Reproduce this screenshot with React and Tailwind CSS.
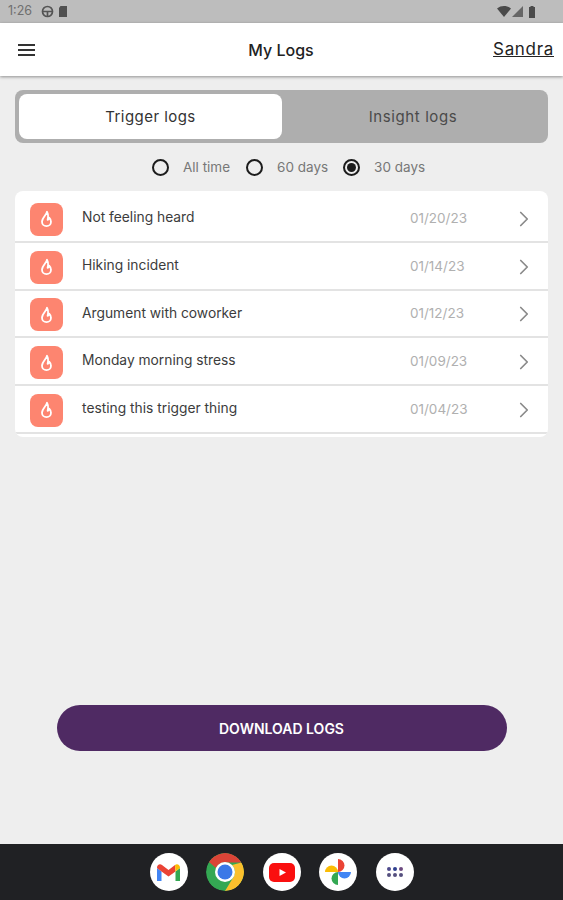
import React from 'react';
import { ChevronRight } from 'lucide-react';

const logs = [
  { title: 'Not feeling heard', date: '01/20/23' },
  { title: 'Hiking incident', date: '01/14/23' },
  { title: 'Argument with coworker', date: '01/12/23' },
  { title: 'Monday morning stress', date: '01/09/23' },
  { title: 'testing this trigger thing', date: '01/04/23' },
];

const Radio = ({ label, checked, labelClass }) => (
  <div className="flex items-center">
    <div className="w-[17px] h-[17px] rounded-full border-2 border-[#1c1c1c] flex items-center justify-center">
      {checked && <div className="w-[9px] h-[9px] rounded-full bg-[#1c1c1c]" />}
    </div>
    <span className={`text-[13.5px] leading-5 text-[#777777] ${labelClass}`}>{label}</span>
  </div>
);

const Flame = () => (
  <svg width="15" height="18" viewBox="0 0 16 20" fill="none" stroke="#ffffff" strokeWidth="2">
    <path d="M8.5 2 C8.5 5 3 8.500 3 13 C3 16 5.200 18 8 18 C10.800 18 13 16 13 13 C13 11 12 9.500 11 8.500 C10.800 10 10 10.800 9.200 11 C10 8 10 4.500 8.500 2 Z" strokeLinejoin="round" />
  </svg>
);

const LogRow = ({ log }) => (
  <div className="h-[47.75px] shrink-0 flex items-center border-b-2 border-[#e3e3e3] pl-[15px] pr-[11px]">
    <div className="w-[33px] h-[33px] mt-[3px] rounded-lg bg-[#fd8570] flex items-center justify-center">
      <Flame />
    </div>
    <span className="ml-[19px] -mt-[1px] flex-1 text-[13.8px] text-[#3c3c3c]">{log.title}</span>
    <span className="text-[13.5px] text-[#b0b0b0] w-[101px]">{log.date}</span>
    <ChevronRight className="w-[26px] h-[26px] mt-[2px] text-[#8a8a8a]" strokeWidth={1.6} />
  </div>
);

const StatusBar = () => (
  <div className="h-[23px] bg-[#bdbdbd] flex items-center justify-between pl-2 pr-[27px] shrink-0">
    <div className="flex items-center">
      <span className="text-[12.500px] text-[#6f6f6f] leading-none w-[33px]">1:26</span>
      <svg width="13" height="13" viewBox="0 0 13 13" fill="none" stroke="#555555" strokeWidth="1.700">
        <circle cx="6.500" cy="6.500" r="5" />
        <path d="M1.500 6.500 H11.500 M6.500 6.500 V11.500" />
      </svg>
      <svg width="10" height="13" viewBox="0 0 10 13" className="ml-[4px]">
        <path d="M2.500 1 H9 V12 H1 V3 Z" fill="#505050" />
      </svg>
    </div>
    <div className="flex items-center gap-[1px]">
      <svg width="14" height="11" viewBox="0 0 14 11">
        <path d="M0 2.500 C4 -0.800 10 -0.800 14 2.500 L7 11 Z" fill="#4a4a4a" />
      </svg>
      <svg width="11" height="11" viewBox="0 0 11 11">
        <path d="M11 0 V11 H0 Z" fill="#666666" />
      </svg>
      <svg width="8" height="12" viewBox="0 0 8 12" className="ml-[4px]">
        <path d="M2.500 0 H5.500 V1 H7 V12 H1 V1 H2.500 Z" fill="#4a4a4a" />
      </svg>
    </div>
  </div>
);

const Dock = () => (
  <div className="h-[56px] bg-[#202124] flex items-center justify-center gap-[18.500px] shrink-0">
    <div className="w-[38px] h-[38px] rounded-full bg-white flex items-center justify-center">
      <svg width="25" height="19" viewBox="0 0 25 19" fill="none">
        <path d="M1 18 V5 L5.500 8.500 V18 Z" fill="#4285f4" />
        <path d="M24 18 V5 L19.500 8.500 V18 Z" fill="#34a853" />
        <path d="M1 5 C1 1.500 4 0.500 6 2 L12.500 7 L19 2 L19.500 8.500 L12.500 13.500 L5.500 8.500 Z" fill="#ea4335" />
        <path d="M19 2 C21 0.500 24 1.500 24 5 L19.500 8.500 Z" fill="#fbbc04" />
      </svg>
    </div>
    <div className="w-[38px] h-[38px] rounded-full overflow-hidden">
      <svg width="38" height="38" viewBox="0 0 38 38">
        <circle cx="19" cy="19" r="19" fill="#34a853" />
        <path d="M3 9 A19 19 0 0 1 35.500 9.500 L19 9.500 A10 10 0 0 0 10 15 Z" fill="#db4437" />
        <path d="M35.500 9.500 A19 19 0 0 1 19 38 L27.500 24 A10 10 0 0 0 26 12 Z" fill="#fbc02d" />
        <circle cx="19" cy="19" r="10" fill="#ffffff" />
        <circle cx="19" cy="19" r="7.500" fill="#3b78e7" />
      </svg>
    </div>
    <div className="w-[38px] h-[38px] rounded-full bg-white flex items-center justify-center">
      <svg width="26" height="19" viewBox="0 0 26 19">
        <rect width="26" height="19" rx="5" fill="#fa0f0f" />
        <path d="M10.500 6 L17 9.500 L10.500 13 Z" fill="#ffffff" />
      </svg>
    </div>
    <div className="w-[38px] h-[38px] rounded-full bg-white flex items-center justify-center">
      <svg width="28" height="28" viewBox="0 0 28 28">
        <path d="M14 14 H1 A6.500 6.500 0 0 1 14 14 Z" fill="#fbbc04" />
        <path d="M14 14 V1 A6.500 6.500 0 0 1 14 14 Z" fill="#ea4335" />
        <path d="M14 14 H27 A6.500 6.500 0 0 1 14 14 Z" fill="#4285f4" />
        <path d="M14 14 V27 A6.500 6.500 0 0 1 14 14 Z" fill="#34a853" />
      </svg>
    </div>
    <div className="w-[38px] h-[38px] rounded-full bg-white grid grid-cols-[repeat(3,4px)] gap-[2px] content-center justify-center">
      <span className="w-[4px] h-[4px] rounded-full bg-[#4f4a8c]" />
      <span className="w-[4px] h-[4px] rounded-full bg-[#2f3f8f]" />
      <span className="w-[4px] h-[4px] rounded-full bg-[#6d4a80]" />
      <span className="w-[4px] h-[4px] rounded-full bg-[#55507f]" />
      <span className="w-[4px] h-[4px] rounded-full bg-[#55507f]" />
      <span className="w-[4px] h-[4px] rounded-full bg-[#55507f]" />
    </div>
  </div>
);

export default function App() {
  return (
    <div className="w-[563px] h-[900px] flex flex-col bg-[#eeeeee] overflow-hidden font-['Inter','Liberation_Sans',sans-serif]">
      <StatusBar />

      <header className="h-[53px] bg-white shrink-0 flex items-center justify-between pl-[18px] pr-[9px] shadow-[0_1px_3px_rgba(0,0,0,0.4)] z-10">
        <div className="flex flex-col gap-[3px]">
          <span className="block w-[17px] h-[2px] bg-[#333333]" />
          <span className="block w-[17px] h-[2px] bg-[#333333]" />
          <span className="block w-[17px] h-[2px] bg-[#333333]" />
        </div>
        <span className="text-[16px] font-medium text-[#222222] ml-[34px]">My Logs</span>
        <span className="text-[17px] tracking-[0.04em] text-[#222222] underline">Sandra</span>
      </header>

      <main className="flex-1 flex flex-col px-[15px] pt-[14px]">
        <div className="h-[53px] bg-[#aeaeae] rounded-lg p-1 flex shrink-0">
          <div className="w-[263px] bg-white rounded-lg flex items-center justify-center pt-[1px] text-[15px] tracking-[0.03em] text-[#333333]">Trigger logs</div>
          <div className="flex-1 flex items-center justify-center pt-[1px] text-[15px] tracking-[0.04em] text-[#4a4a4a]">Insight logs</div>
        </div>

        <div className="flex items-center justify-start mt-[14px] h-5 pl-[137px]">
          <Radio label="All time" labelClass="ml-[14px] mr-[16px]" />
          <Radio label="60 days" labelClass="ml-[14px] mr-[15px]" />
          <Radio label="30 days" checked labelClass="ml-[14px]" />
        </div>

        <div className="mt-[14px] bg-white rounded-lg h-[246px] pt-[4px] flex flex-col overflow-hidden">
          {logs.map((log) => (
            <LogRow key={log.title} log={log} />
          ))}
        </div>

        <div className="flex-1 flex justify-center pt-[268px]">
          <button className="w-[450px] h-[46px] rounded-full bg-[#4f2a63] text-white text-[14px] font-semibold">DOWNLOAD LOGS</button>
        </div>
      </main>

      <Dock />
    </div>
  );
}
